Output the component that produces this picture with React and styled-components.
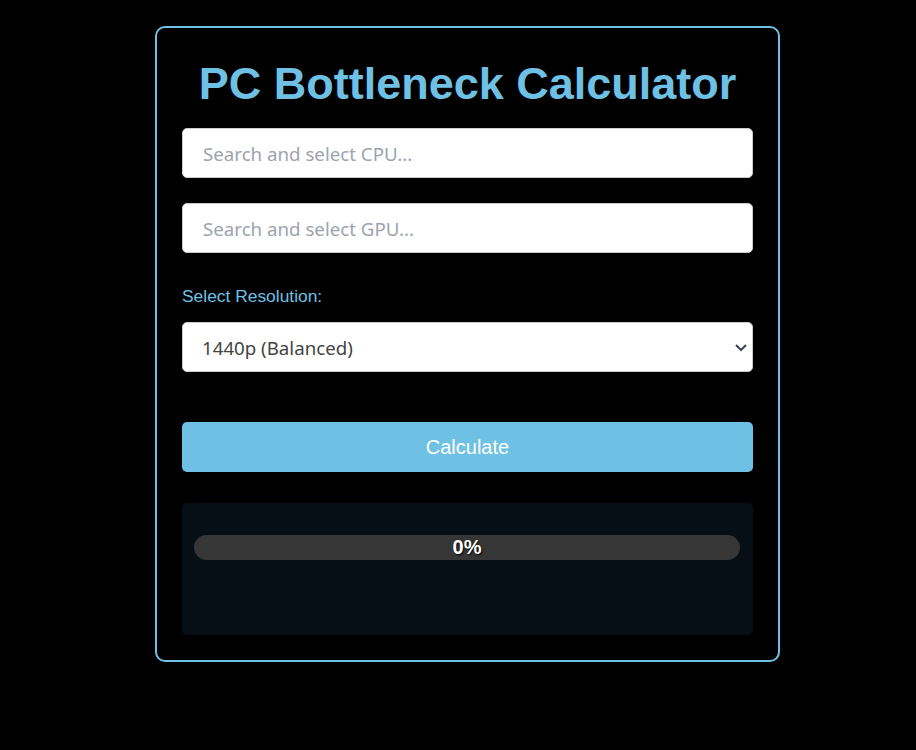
import React from "react";
import styled, { createGlobalStyle } from "styled-components";

const Global = createGlobalStyle`
  html, body { margin: 0; padding: 0; background: #000; }
  body { font-family: "Liberation Sans", Arial, sans-serif; }
  * { box-sizing: border-box; }
`;

const Page = styled.div`
  min-height: 750px;
  padding: 26px 0 0 155px;
`;

const Card = styled.div`
  width: 625px;
  border: 2px solid #6ec1e4;
  border-radius: 10px;
  padding: 30px 25px 25px;
  display: flex;
  flex-direction: column;
`;

const Title = styled.h1`
  margin: 0 0 18px;
  text-align: center;
  color: #6ec1e4;
  font-family: "Liberation Sans", Arial, sans-serif;
  font-weight: 700;
  font-size: 45px;
  line-height: 52px;
`;

const Field = styled.input`
  height: 50px;
  width: 100%;
  border: 1px solid #ccc;
  border-radius: 5px;
  background: #fff;
  padding: 1px 20px 0;
  font-family: "Noto Sans", "Open Sans", sans-serif;
  font-size: 18.7px;
  color: #333;
  margin-bottom: ${(p) => p.$mb || 0}px;
  outline: none;
  &::placeholder { color: #9ca3af; }
`;

const Label = styled.label`
  color: #6ec1e4;
  font-size: 17.4px;
  line-height: 20px;
  margin: 0 0 16px;
`;

const SelectWrap = styled.div`
  position: relative;
  height: 50px;
  margin-bottom: 50px;
`;

const Select = styled.select`
  appearance: none;
  width: 100%;
  height: 50px;
  border: 1px solid #ccc;
  border-radius: 5px;
  background: #fff;
  padding: 0 19px;
  font-family: "Noto Sans", "Open Sans", sans-serif;
  font-size: 18.7px;
  color: #444;
  outline: none;
`;

const Chevron = styled.svg`
  position: absolute;
  right: 5px;
  top: 20px;
  pointer-events: none;
`;

const Button = styled.button`
  height: 50px;
  width: 100%;
  border: none;
  border-radius: 5px;
  background: #6ec1e4;
  color: #fff;
  font-family: "Liberation Sans", Arial, sans-serif;
  font-size: 20px;
  cursor: pointer;
  margin-bottom: 31px;
`;

const Result = styled.div`
  background: #050f15;
  border-radius: 5px;
  padding: 32px 13px 0 12px;
  height: 132px;
`;

const Bar = styled.div`
  position: relative;
  height: 25px;
  border-radius: 13px;
  background: #363636;
  display: flex;
  align-items: center;
  justify-content: center;
  overflow: hidden;
`;

const Fill = styled.div`
  position: absolute;
  left: 0;
  top: 0;
  bottom: 0;
  background: #6ec1e4;
`;

const Percent = styled.span`
  position: relative;
  color: #fff;
  font-weight: 700;
  font-size: 20px;
  font-family: "Liberation Sans", Arial, sans-serif;
  text-shadow: 1px 1px 2px #000;
`;

export default function App() {
  const pct = 0;
  return (
    <>
      <Global />
      <Page>
        <Card>
          <Title>PC Bottleneck Calculator</Title>
          <Field placeholder="Search and select CPU..." $mb={25} />
          <Field placeholder="Search and select GPU..." $mb={33} />
          <Label>Select Resolution:</Label>
          <SelectWrap>
            <Select defaultValue="1440">
              <option value="1080">1080p (CPU Heavy)</option>
              <option value="1440">1440p (Balanced)</option>
              <option value="2160">4K (GPU Heavy)</option>
            </Select>
            <Chevron width="14" height="10" viewBox="0 0 14 10">
              <path d="M2 3 L7 8 L12 3" fill="none" stroke="#3c4456" strokeWidth="2" />
            </Chevron>
          </SelectWrap>
          <Button>Calculate</Button>
          <Result>
            <Bar>
              <Fill style={{ width: `${pct}%` }} />
              <Percent>{pct}%</Percent>
            </Bar>
          </Result>
        </Card>
      </Page>
    </>
  );
}
